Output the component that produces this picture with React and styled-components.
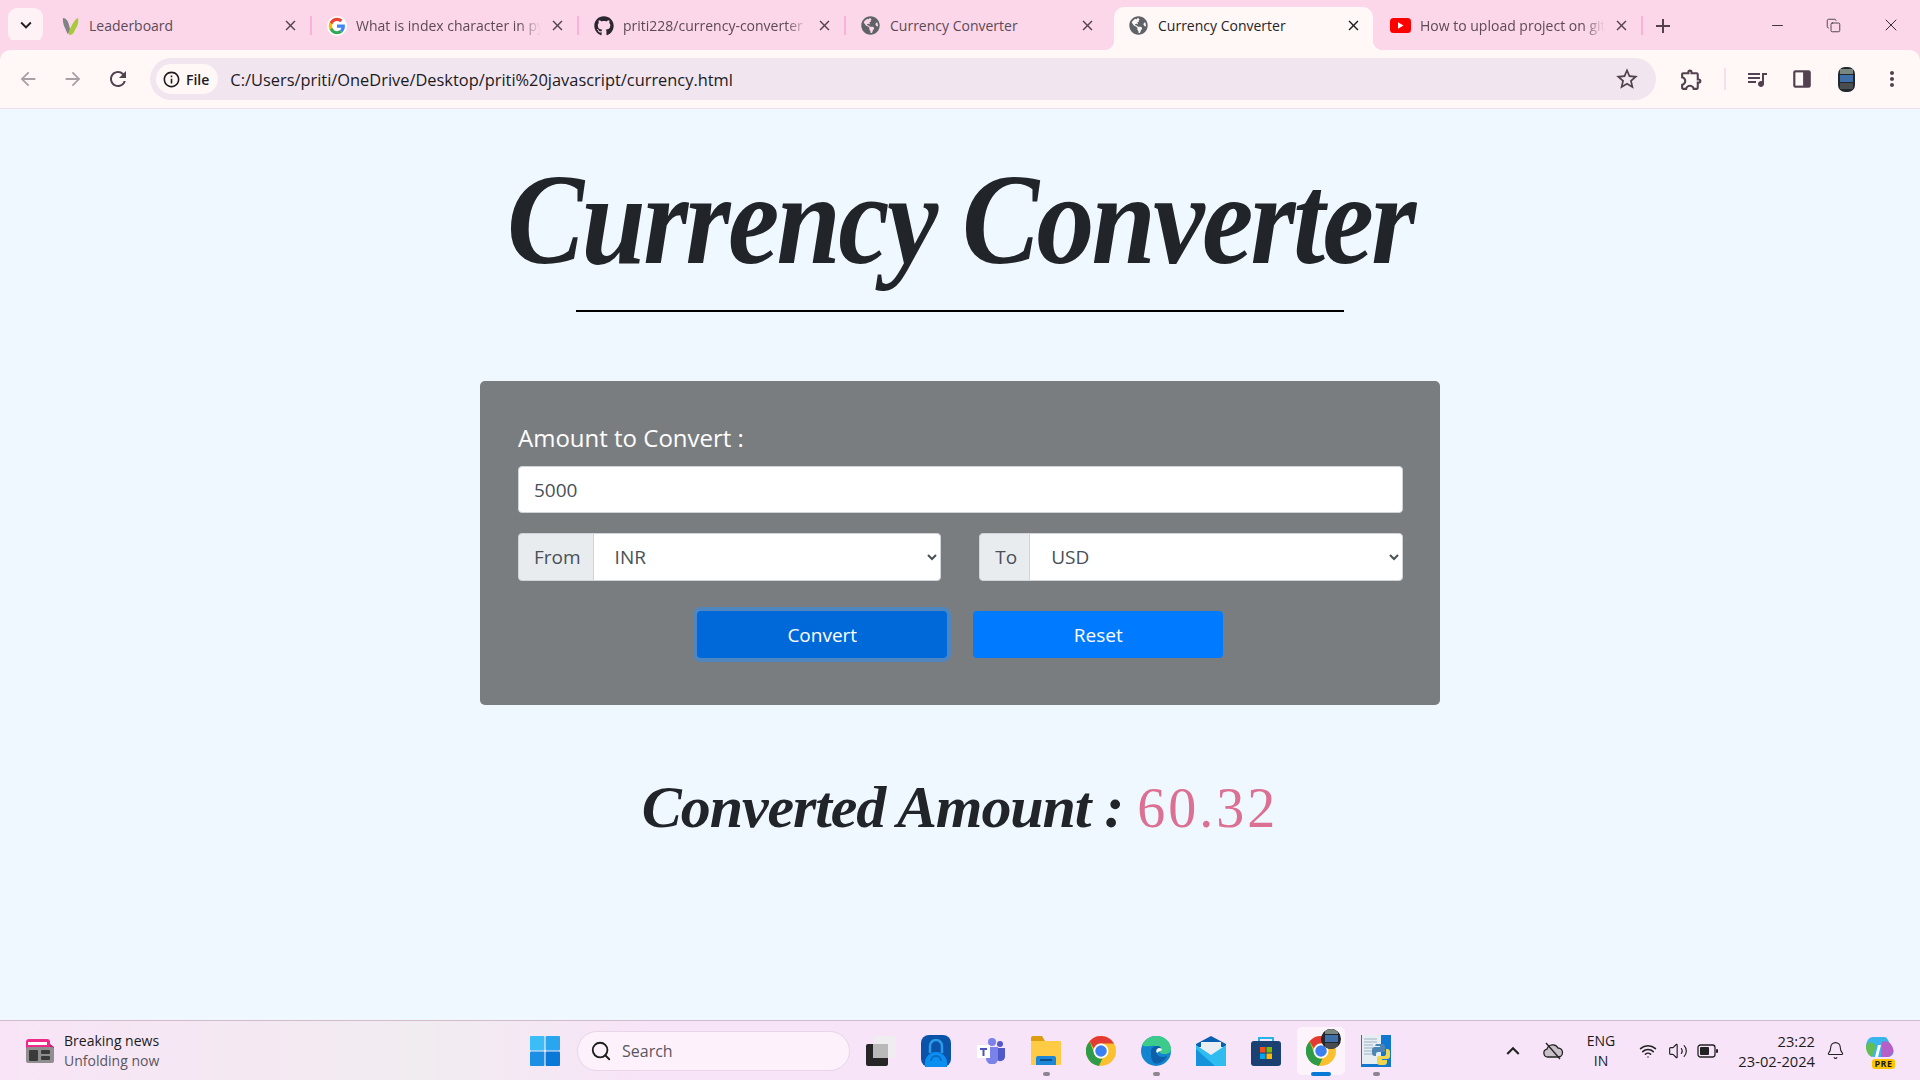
import React from 'react';
import styled, { createGlobalStyle } from 'styled-components';
import { FaGithub, FaGlobeAmericas } from 'react-icons/fa';
import {
  MdArrowBack, MdArrowForward, MdRefresh, MdInfoOutline, MdStarBorder, MdOutlineExtension,
  MdOutlineQueueMusic, MdMoreVert, MdClose, MdAdd, MdKeyboardArrowDown, MdKeyboardArrowUp,
} from 'react-icons/md';
import { Search, Bell, Wifi, Volume2, Minus, X, Copy } from 'lucide-react';

const GlobalStyle = createGlobalStyle`
  html, body { margin: 0; padding: 0; height: 100%; overflow: hidden; }
  body { font-family: "Open Sans", "Noto Sans", sans-serif; background: #f0f8ff; }
  * { box-sizing: border-box; }
`;

const Leaf = () => (
  <svg width="20" height="20" viewBox="0 0 20 20">
    <path d="M3 2c3 0 5 3 6 7l1.500 6-3 3C6 13 2 8 3 2z" fill="#7f8386" />
    <path d="M18 2c1 5-1 9-3 12-1 3-3 5-6 5-1-2 0-5 2-8 2-4 4-8 7-9z" fill="#a8c93a" />
  </svg>
);

const GoogleG = () => (
  <svg width="20" height="20" viewBox="0 0 48 48">
    <circle cx="24" cy="24" r="24" fill="#fff" />
    <path fill="#4285f4" d="M43 24.5c0-1.400-.1-2.700-.4-4H24v7.600h10.700c-.5 2.500-1.900 4.600-4 6l6.200 4.800c3.700-3.400 6.100-8.400 6.100-14.400z" />
    <path fill="#34a853" d="M24 44c5.400 0 9.900-1.800 13-4.800l-6.200-4.800c-1.800 1.200-4 1.900-6.800 1.900-5.200 0-9.600-3.500-11.200-8.200H6.400v5C9.700 39.600 16.300 44 24 44z" />
    <path fill="#fbbc05" d="M12.800 28.100a12 12 0 0 1 0-8.200v-5H6.400a20 20 0 0 0 0 18.200z" />
    <path fill="#ea4335" d="M24 11.800c2.900 0 5.600 1 7.600 3l5.600-5.600C33.900 6 29.400 4 24 4 16.300 4 9.700 8.400 6.400 14.900l6.400 5c1.600-4.700 6-8.100 11.200-8.100z" />
  </svg>
);

const YouTube = () => (
  <svg width="21" height="15" viewBox="0 0 21 15">
    <rect width="21" height="15" rx="3.500" fill="#f00" />
    <path d="M8 4.200l5.500 3.300L8 10.800z" fill="#fff" />
  </svg>
);

const NewsIcon = () => (
  <svg width="30" height="26" viewBox="0 0 30 26">
    <rect x="1" y="1" width="24" height="12" rx="3" fill="#f0288a" />
    <rect x="3" y="4" width="19" height="3" fill="#fff" />
    <path d="M25 6l4 3v4h-4z" fill="#c4156f" />
    <rect x="1" y="9" width="28" height="16" rx="2" fill="#8f8f8f" />
    <rect x="4" y="12" width="9" height="11" rx="1" fill="#3a3a3a" />
    <rect x="16" y="12" width="9" height="4" rx="1" fill="#3a3a3a" />
    <rect x="16" y="18" width="9" height="4" rx="1" fill="#3a3a3a" />
  </svg>
);

const WindowsLogo = () => (
  <svg width="30" height="30" viewBox="0 0 30 30">
    <rect width="14.400" height="14.400" rx="1" fill="#3cbdf5" />
    <rect x="15.600" width="14.400" height="14.400" rx="1" fill="#2aa6ee" />
    <rect y="15.600" width="14.400" height="14.400" rx="1" fill="#1b8fe3" />
    <rect x="15.600" y="15.600" width="14.400" height="14.400" rx="1" fill="#0a78d6" />
  </svg>
);

const TaskView = () => (
  <svg width="30" height="30" viewBox="0 0 30 30">
    <rect x="0" y="8" width="22" height="22" rx="2" fill="#262626" />
    <rect x="7" y="0" width="23" height="22" rx="2" fill="#eeeeee" opacity="0.92" />
    <rect x="7" y="8" width="15" height="14" fill="#b9b9b9" />
  </svg>
);

const LockApp = () => (
  <svg width="30" height="32" viewBox="0 0 30 32">
    <rect width="30" height="32" rx="8" fill="#0b53a8" />
    <path d="M9 18v-7a6 6 0 0 1 12 0v7" fill="none" stroke="#2a9be8" strokeWidth="2.500" />
    <path d="M4 32v-4a11 11 0 0 1 22 0v4z" fill="#0a8ef0" />
    <path d="M10 26a5 5 0 0 1 10 0" fill="none" stroke="#0b6cc4" strokeWidth="2" />
  </svg>
);

const Teams = () => (
  <svg width="28" height="26" viewBox="0 0 28 26">
    <circle cx="15" cy="4" r="4" fill="#7b83eb" />
    <circle cx="23" cy="6" r="3" fill="#5059c9" />
    <path d="M19 10h9v9a5 5 0 0 1-9 2z" fill="#5059c9" />
    <path d="M8 9h13v11a6 6 0 0 1-12 1z" fill="#7b83eb" />
    <rect x="0" y="7" width="13" height="13" fill="#fff" />
    <path d="M3 10h7v2H7.500v6h-2v-6H3z" fill="#4b53bc" />
  </svg>
);

const Folder = () => (
  <svg width="30" height="29" viewBox="0 0 30 29">
    <path d="M0 2a2 2 0 0 1 2-2h9l3 5H0z" fill="#dd9d10" />
    <rect y="5" width="30" height="24" rx="1" fill="#ffcb45" />
    <path d="M5 29v-7a2 2 0 0 1 2-2h16a2 2 0 0 1 2 2v7z" fill="#1c87d8" />
    <rect x="9" y="23" width="12" height="2" fill="#0b4f8c" />
  </svg>
);

const Chrome = () => (
  <svg width="30" height="30" viewBox="0 0 24 24">
    <circle cx="12" cy="12" r="12" fill="#fbc02d" />
    <path d="M12 0a12 12 0 0 1 10.400 6H12a6 6 0 0 0-5.700 4.100L2.900 4.100A12 12 0 0 1 12 0z" fill="#e53935" />
    <path d="M2.900 4.100L7 14.900A6 6 0 0 0 13.200 17.900L10.300 23.900A12 12 0 0 1 2.900 4.100z" fill="#2e9b48" />
    <circle cx="12" cy="12" r="6" fill="#fff" />
    <circle cx="12" cy="12" r="4.600" fill="#3b7ff0" />
  </svg>
);

const Edge = () => (
  <svg width="30" height="30" viewBox="0 0 30 30">
    <circle cx="15" cy="15" r="15" fill="#1384cf" />
    <path d="M1 9C4 2 11 0 16 0c8 0 14 6 14 13 0 4-3 5-7 5-4 0-5-2-4-4-1-3-5-5-9-4-4 0-7 1-9-1z" fill="#3ccb8b" />
    <path d="M10 16c0-4 3-6 6-6 3 0 5 2 4 4-3 0-5 1-4 4 1 3 6 4 10 2-3 6-9 9-13 7-3-3-3-7-3-11z" fill="#0c5fa8" />
    <path d="M16 13c2-2 5-1 5 1-1 1-3 1-5 3-1-1-1-3 0-4z" fill="#fff" />
  </svg>
);

const Mail = () => (
  <svg width="30" height="30" viewBox="0 0 30 30">
    <path d="M0 8l15-8 15 8v3H0z" fill="#0b5fb0" />
    <path d="M5 6h20v10H5z" fill="#e8eef2" />
    <path d="M0 9l15 10L30 9v21H0z" fill="#2fbdf0" />
    <path d="M0 30V13l19 17z" fill="#1592da" />
  </svg>
);

const Store = () => (
  <svg width="30" height="30" viewBox="0 0 30 30">
    <path d="M8 6V2h14v4" fill="none" stroke="#22b5ea" strokeWidth="2" />
    <rect y="5" width="30" height="25" rx="3" fill="#1a4171" />
    <rect x="9" y="11" width="5.500" height="5.500" fill="#f25022" />
    <rect x="15.500" y="11" width="5.500" height="5.500" fill="#7fba00" />
    <rect x="9" y="17.500" width="5.500" height="5.500" fill="#00a4ef" />
    <rect x="15.500" y="17.500" width="5.500" height="5.500" fill="#ffb900" />
  </svg>
);

const PythonFile = () => (
  <svg width="30" height="32" viewBox="0 0 30 32">
    <rect width="30" height="32" fill="#1177cf" />
    <rect x="1" y="0" width="19" height="29" fill="#e6edf3" />
    <path d="M3 4h13M3 7h13M3 10h9M3 13h9M3 16h8M3 19h8" stroke="#9fb2c2" strokeWidth="1" />
    <path d="M15 9h6a3 3 0 0 1 3 3v5h-7a2 2 0 0 0-2 2v2h-1a3 3 0 0 1-3-3v-3a3 3 0 0 1 3-3h5v-1h-5z" fill="#4d86b5" />
    <path d="M25 14h1a3 3 0 0 1 3 3v4a3 3 0 0 1-3 3h-5v1h5v2a3 3 0 0 1-3 3h-4a3 3 0 0 1-3-3v-4a2 2 0 0 1 2-2h5a2 2 0 0 0 2-2z" fill="#f2d54c" />
  </svg>
);

const Copilot = () => (
  <svg width="28" height="23" viewBox="0 0 28 23">
    <path d="M7 1h11c2 0 3 1 4 3l5 9c2 4-1 8-5 8H8c-3 0-5-2-6-4L0 11C0 5 3 1 7 1z" fill="#38b5ea" />
    <path d="M0 11c0-3 3-6 7-4l3 3-4 11c-3-1-6-5-6-10z" fill="#63bd55" />
    <path d="M16 6c4-2 8 0 10 4 3 5 0 11-5 11h-6z" fill="#b65fc9" />
    <path d="M12 9h3l-3 12H9z" fill="#fff" />
  </svg>
);

const Avatar = () => (
  <svg width="17" height="25" viewBox="0 0 17 25">
    <rect width="17" height="25" rx="7" fill="#23282c" />
    <rect x="2" y="2" width="13" height="5" fill="#7a8780" />
    <rect x="2" y="8" width="13" height="7" fill="#3e6fa8" />
    <rect x="2" y="16" width="13" height="6" fill="#4a4d50" />
  </svg>
);

const SidePanel = () => (
  <svg width="22" height="22" viewBox="0 0 20 20">
    <rect x="2" y="2" width="16" height="16" rx="2" fill="#54414f" />
    <rect x="4" y="4" width="7" height="12" fill="#fff8f8" />
  </svg>
);

const Battery = () => (
  <svg width="22" height="14" viewBox="0 0 22 14">
    <rect x="1" y="1" width="17" height="12" rx="2.500" fill="none" stroke="#222" strokeWidth="1.300" />
    <rect x="3" y="3" width="9" height="8" rx="1" fill="#222" />
    <rect x="19" y="5" width="2" height="4" rx="1" fill="#222" />
  </svg>
);

const CloudSlash = () => (
  <svg width="22" height="18" viewBox="0 0 22 18">
    <path d="M6 15a4 4 0 0 1-1-7.900A6 6 0 0 1 16 6a4.500 4.500 0 0 1 0 9z" fill="#c9bfc9" stroke="#222" strokeWidth="1.300" />
    <path d="M4 1l14 16" stroke="#222" strokeWidth="1.400" />
  </svg>
);

const tabs = [
  { title: 'Leaderboard', icon: <Leaf /> },
  { title: 'What is index character in python', icon: <GoogleG />, clip: true },
  { title: 'priti228/currency-converter', icon: <FaGithub size={20} color="#2b2630" />, clip: true },
  { title: 'Currency Converter', icon: <FaGlobeAmericas size={19} color="#5f6368" />, width: 261 },
  { title: 'Currency Converter', icon: <FaGlobeAmericas size={19} color="#5f6368" />, active: true, width: 259, gap: 7 },
  { title: 'How to upload project on github', icon: <YouTube />, clip: true, gap: 3 },
];

const apps = [
  { key: 'view', icon: <TaskView /> },
  { key: 'lock', icon: <LockApp /> },
  { key: 'teams', icon: <Teams /> },
  { key: 'folder', icon: <Folder />, open: true },
  { key: 'chrome', icon: <Chrome /> },
  { key: 'edge', icon: <Edge />, open: true },
  { key: 'mail', icon: <Mail /> },
  { key: 'store', icon: <Store /> },
  { key: 'chrome2', icon: <Chrome />, active: true, badge: true },
  { key: 'python', icon: <PythonFile />, open: true },
];

const App = () => {
  return (
    <Screen>
      <GlobalStyle />
      <TabStrip>
        <TabMenu><MdKeyboardArrowDown size={22} color="#1f1f1f" /></TabMenu>
        {tabs.map((tab, i) => (
          <React.Fragment key={i}>
            <Tab $active={tab.active} $width={tab.width || 265} $gap={tab.gap || 0}>
              <TabIcon>{tab.icon}</TabIcon>
              <TabTitle $clip={tab.clip} $active={tab.active}>{tab.title}</TabTitle>
              <TabClose $active={tab.active}><MdClose size={17} /></TabClose>
            </Tab>
            {i !== 3 && i !== 4 && <TabSep />}
          </React.Fragment>
        ))}
        <NewTab><MdAdd size={24} /></NewTab>
        <WindowControls>
          <WindowButton $w={56}><Minus size={17} strokeWidth={1.200} /></WindowButton>
          <WindowButton $w={56}><Copy size={15} strokeWidth={1.200} /></WindowButton>
          <WindowButton $w={59}><X size={20} strokeWidth={1.100} /></WindowButton>
        </WindowControls>
      </TabStrip>

      <Toolbar>
        <NavButton $dim><MdArrowBack size={22} /></NavButton>
        <NavButton $dim><MdArrowForward size={22} /></NavButton>
        <NavButton><MdRefresh size={24} /></NavButton>
        <Omnibox>
          <FileChip><MdInfoOutline size={19} /><span>File</span></FileChip>
          <Url>C:/Users/priti/OneDrive/Desktop/priti%20javascript/currency.html</Url>
          <StarWrap><MdStarBorder size={26} /></StarWrap>
        </Omnibox>
        <ToolIcons>
          <ToolButton><MdOutlineExtension size={25} /></ToolButton>
          <ToolSep />
          <ToolButton><MdOutlineQueueMusic size={24} /></ToolButton>
          <ToolButton><SidePanel /></ToolButton>
          <ToolButton><Avatar /></ToolButton>
          <ToolButton><MdMoreVert size={24} /></ToolButton>
        </ToolIcons>
      </Toolbar>

      <Page>
        <Title>Currency Converter</Title>
        <Rule />
        <Card>
          <FieldLabel htmlFor="amount">Amount to Convert :</FieldLabel>
          <AmountInput id="amount" type="text" defaultValue="5000" />
          <SelectRow>
            <SelectGroup>
              <Addon>From</Addon>
              <CurrencySelect defaultValue="INR">
                <option>INR</option>
                <option>USD</option>
              </CurrencySelect>
            </SelectGroup>
            <SelectGroup>
              <Addon>To</Addon>
              <CurrencySelect defaultValue="USD">
                <option>USD</option>
                <option>INR</option>
              </CurrencySelect>
            </SelectGroup>
          </SelectRow>
          <ButtonRow>
            <ActionButton $focused>Convert</ActionButton>
            <ActionButton>Reset</ActionButton>
          </ButtonRow>
        </Card>
        <Result>Converted Amount : <ResultValue>60.32</ResultValue></Result>
      </Page>

      <Taskbar>
        <News>
          <NewsIcon />
          <NewsText>
            <NewsHead>Breaking news</NewsHead>
            <NewsSub>Unfolding now</NewsSub>
          </NewsText>
        </News>
        <StartButton><WindowsLogo /></StartButton>
        <SearchPill>
          <Search size={22} color="#1d1d1d" strokeWidth={2} />
          <span>Search</span>
        </SearchPill>
        <Apps>
          {apps.map((app) => (
            <AppCell key={app.key}>
              <AppTile $active={app.active}>{app.icon}</AppTile>
              {app.badge && <AppBadge><Avatar /></AppBadge>}
              {(app.open || app.active) && <AppDot $active={app.active} />}
            </AppCell>
          ))}
        </Apps>
        <Tray>
          <TrayCell $w={40}><MdKeyboardArrowUp size={26} color="#222" /></TrayCell>
          <TrayCell $w={40}><CloudSlash /></TrayCell>
          <Lang>ENG<br />IN</Lang>
          <TrayCell $w={30}><Wifi size={18} color="#222" /></TrayCell>
          <TrayCell $w={30}><Volume2 size={20} color="#222" strokeWidth={1.400} /></TrayCell>
          <TrayCell $w={30}><Battery /></TrayCell>
          <Clock>23:22<br />23-02-2024</Clock>
          <TrayCell $w={40}><Bell size={19} color="#222" strokeWidth={1.400} /></TrayCell>
          <CopilotCell>
            <Copilot />
            <PreBadge>PRE</PreBadge>
          </CopilotCell>
        </Tray>
      </Taskbar>
    </Screen>
  );
};

const Screen = styled.div`
  display: flex;
  flex-direction: column;
  height: 100vh;
  width: 100%;
  overflow: hidden;
`;

const TabStrip = styled.div`
  display: flex;
  align-items: flex-end;
  height: 50px;
  flex-shrink: 0;
  padding-left: 8px;
  background: #fcd7ea;
`;

const TabMenu = styled.div`
  display: flex;
  align-items: center;
  justify-content: center;
  width: 35px;
  height: 34px;
  margin: 0 2px 8px 0;
  border-radius: 9px;
  background: #fff2f7;
`;

const Tab = styled.div`
  position: relative;
  display: flex;
  align-items: center;
  width: ${(p) => p.$width}px;
  height: 43px;
  margin-left: ${(p) => p.$gap}px;
  padding: 0 10px 6px 14px;
  border-radius: 10px 10px 0 0;
  background: ${(p) => (p.$active ? '#fff8f7' : 'transparent')};

  ${(p) => p.$active && `
    &::before, &::after {
      content: '';
      position: absolute;
      bottom: 0;
      width: 10px;
      height: 10px;
    }
    &::before {
      left: -10px;
      background: radial-gradient(circle at 0 0, transparent 10px, #fff8f7 10.500px);
    }
    &::after {
      right: -10px;
      background: radial-gradient(circle at 100% 0, transparent 10px, #fff8f7 10.500px);
    }
  `}
`;

const TabIcon = styled.div`
  display: flex;
  align-items: center;
  justify-content: center;
  width: 21px;
  flex-shrink: 0;
`;

const TabTitle = styled.div`
  flex: 1;
  min-width: 0;
  margin-left: 9px;
  font-size: 14px;
  white-space: nowrap;
  overflow: hidden;
  color: ${(p) => (p.$active ? '#262326' : '#5b4a56')};
  ${(p) => p.$clip && `
    -webkit-mask-image: linear-gradient(90deg, #000 88%, transparent 100%);
    mask-image: linear-gradient(90deg, #000 88%, transparent 100%);
  `}
`;

const TabClose = styled.div`
  display: flex;
  align-items: center;
  justify-content: center;
  width: 20px;
  margin-left: 6px;
  color: ${(p) => (p.$active ? '#1f1f1f' : '#54414f')};
`;

const TabSep = styled.div`
  width: 2px;
  height: 19px;
  margin-bottom: 15px;
  flex-shrink: 0;
  background: #fdb0da;
`;

const NewTab = styled.div`
  display: flex;
  align-items: center;
  justify-content: center;
  width: 40px;
  height: 43px;
  padding-bottom: 6px;
  color: #54414f;
`;

const WindowControls = styled.div`
  display: flex;
  margin-left: auto;
  height: 50px;
`;

const WindowButton = styled.div`
  display: flex;
  align-items: center;
  justify-content: center;
  width: ${(p) => p.$w}px;
  color: #1f1a1e;
`;

const Toolbar = styled.div`
  display: flex;
  align-items: center;
  height: 59px;
  flex-shrink: 0;
  padding-left: 5px;
  background: #fff8f7;
  border-bottom: 1px solid #f1e0ea;
  border-radius: 10px 10px 0 0;
  box-shadow: 0 -10px 0 #fcd7ea;
`;

const NavButton = styled.div`
  display: flex;
  align-items: center;
  justify-content: center;
  width: 45px;
  color: ${(p) => (p.$dim ? '#a9a0a6' : '#54414f')};
`;

const Omnibox = styled.div`
  display: flex;
  align-items: center;
  width: 1506px;
  height: 42px;
  margin-left: 10px;
  padding: 0 16px 0 6px;
  border-radius: 21px;
  background: #f1e6ef;
`;

const FileChip = styled.div`
  display: flex;
  align-items: center;
  gap: 5px;
  height: 30px;
  padding: 0 9px 0 6px;
  border-radius: 15px;
  background: #fff8f7;
  font-size: 14px;
  font-weight: 600;
  color: #201a1f;
`;

const Url = styled.div`
  flex: 1;
  margin-left: 12px;
  font-size: 16.400px;
  color: #201a1f;
  white-space: nowrap;
`;

const StarWrap = styled.div`
  display: flex;
  color: #54414f;
`;

const ToolIcons = styled.div`
  display: flex;
  align-items: center;
  margin-left: 13px;
`;

const ToolButton = styled.div`
  display: flex;
  align-items: center;
  justify-content: center;
  width: 45px;
  color: #54414f;
`;

const ToolSep = styled.div`
  width: 2px;
  height: 22px;
  margin: 0 8px 0 10px;
  background: #fbdcec;
`;

const Page = styled.main`
  display: flex;
  flex-direction: column;
  align-items: center;
  flex: 1;
  min-height: 0;
  background: #f0f8ff;
`;

const Title = styled.h1`
  margin: 45px 0 0;
  font-family: "Liberation Serif", "Times New Roman", serif;
  font-style: italic;
  font-weight: 700;
  font-size: 130px;
  line-height: 130px;
  letter-spacing: -3px;
  color: #212529;
  white-space: nowrap;
  transform: scaleX(0.89);
`;

const Rule = styled.hr`
  width: 768px;
  height: 2px;
  margin: 26px 0 0;
  border: 0;
  background: #000;
`;

const Card = styled.form`
  display: flex;
  flex-direction: column;
  width: 960px;
  height: 324px;
  margin-top: 69px;
  padding: 39px 37.500px 0 38px;
  border-radius: 5px;
  background: #7a7d80;
`;

const FieldLabel = styled.label`
  height: 36px;
  margin-bottom: 10px;
  font-size: 24px;
  line-height: 36px;
  color: #fff;
`;

const AmountInput = styled.input`
  height: 47px;
  padding: 0 15px;
  border: 1px solid #ced4da;
  border-radius: 4px;
  background: #fff;
  font-family: inherit;
  font-size: 19px;
  color: #495057;
  outline: none;
`;

const SelectRow = styled.div`
  display: grid;
  grid-template-columns: 1fr 1fr;
  gap: 38px;
  margin-top: 20px;
`;

const SelectGroup = styled.div`
  display: flex;
  height: 48px;
`;

const Addon = styled.span`
  display: flex;
  align-items: center;
  padding: 0 12px 0 15px;
  border: 1px solid #ced4da;
  border-radius: 4px 0 0 4px;
  background: #e9ecef;
  font-size: 19px;
  color: #495057;
`;

const CurrencySelect = styled.select`
  flex: 1;
  min-width: 0;
  margin-left: -1px;
  padding: 0 3px 0 17px;
  border: 1px solid #ced4da;
  border-radius: 0 4px 4px 0;
  background: #fff;
  font-family: inherit;
  font-size: 19px;
  color: #495057;
  outline: none;
`;

const ButtonRow = styled.div`
  display: flex;
  justify-content: center;
  gap: 26px;
  margin-top: 30px;
`;

const ActionButton = styled.button.attrs({ type: 'button' })`
  width: 250px;
  height: 47px;
  border: 0;
  border-radius: 4px;
  background: ${(p) => (p.$focused ? '#0069d9' : '#007bff')};
  box-shadow: ${(p) => (p.$focused ? '0 0 0 4px rgba(38, 143, 255, 0.5)' : 'none')};
  font-family: inherit;
  font-size: 19px;
  color: #fff;
`;

const Result = styled.h2`
  margin: 67px 0 0;
  font-family: "Liberation Serif", "Times New Roman", serif;
  font-style: italic;
  font-weight: 700;
  font-size: 60px;
  line-height: 70px;
  letter-spacing: -1.100px;
  color: #212529;
`;

const ResultValue = styled.span`
  font-style: normal;
  font-weight: 400;
  font-size: 56px;
  letter-spacing: 3px;
  color: #db7093;
`;

const Taskbar = styled.footer`
  display: flex;
  align-items: center;
  height: 60px;
  flex-shrink: 0;
  border-top: 1px solid #d0bccb;
  background: linear-gradient(90deg, #f8e4f6 0, #f1ecf0 22%, #f8e4f8 34%);
`;

const News = styled.div`
  display: flex;
  align-items: center;
  gap: 9px;
  width: 530px;
  padding-left: 25px;
  flex-shrink: 0;
`;

const NewsText = styled.div`
  font-size: 14px;
  line-height: 20px;
`;

const NewsHead = styled.div`
  color: #1b1b1b;
`;

const NewsSub = styled.div`
  color: #5a5560;
`;

const StartButton = styled.div`
  display: flex;
  width: 30px;
`;

const SearchPill = styled.div`
  display: flex;
  align-items: center;
  gap: 10px;
  width: 273px;
  height: 40px;
  margin-left: 17px;
  padding-left: 12px;
  border: 1px solid #e8d5e8;
  border-radius: 20px;
  background: #fdf2fc;
  font-size: 16px;
  color: #5b5560;
`;

const Apps = styled.div`
  display: flex;
  margin-left: 3px;
`;

const AppCell = styled.div`
  position: relative;
  display: flex;
  align-items: center;
  justify-content: center;
  width: 55px;
  height: 59px;
`;

const AppTile = styled.div`
  display: flex;
  align-items: center;
  justify-content: center;
  width: 48px;
  height: 48px;
  border-radius: 5px;
  background: ${(p) => (p.$active ? '#fdf3fb' : 'transparent')};
`;

const AppBadge = styled.div`
  position: absolute;
  top: 8px;
  right: 7px;
  display: flex;
  align-items: center;
  justify-content: center;
  width: 20px;
  height: 20px;
  border-radius: 50%;
  overflow: hidden;
  background: #23282c;
`;

const AppDot = styled.div`
  position: absolute;
  bottom: 4px;
  left: 50%;
  width: ${(p) => (p.$active ? '20px' : '7px')};
  height: 4px;
  margin-left: ${(p) => (p.$active ? '-10px' : '-3px')};
  border-radius: 2px;
  background: ${(p) => (p.$active ? '#0a78d6' : '#8d8690')};
`;

const Tray = styled.div`
  display: flex;
  align-items: center;
  margin-left: auto;
  padding-right: 15px;
`;

const TrayCell = styled.div`
  display: flex;
  align-items: center;
  justify-content: center;
  width: ${(p) => p.$w}px;
`;

const Lang = styled.div`
  width: 56px;
  margin-right: 4px;
  font-size: 14px;
  line-height: 20px;
  text-align: center;
  color: #1b1b1b;
`;

const Clock = styled.div`
  width: 92px;
  font-size: 14.700px;
  line-height: 20px;
  text-align: right;
  white-space: nowrap;
  color: #1b1b1b;
`;

const CopilotCell = styled.div`
  position: relative;
  display: flex;
  align-items: center;
  justify-content: center;
  width: 50px;
  height: 36px;
  padding-bottom: 6px;
`;

const PreBadge = styled.span`
  position: absolute;
  right: 10px;
  bottom: 0;
  width: 23px;
  border-radius: 3px;
  background: #ffc400;
  font-size: 9px;
  font-weight: 700;
  line-height: 10px;
  text-align: center;
  letter-spacing: 0.500px;
  color: #1b1b1b;
`;

export default App;
